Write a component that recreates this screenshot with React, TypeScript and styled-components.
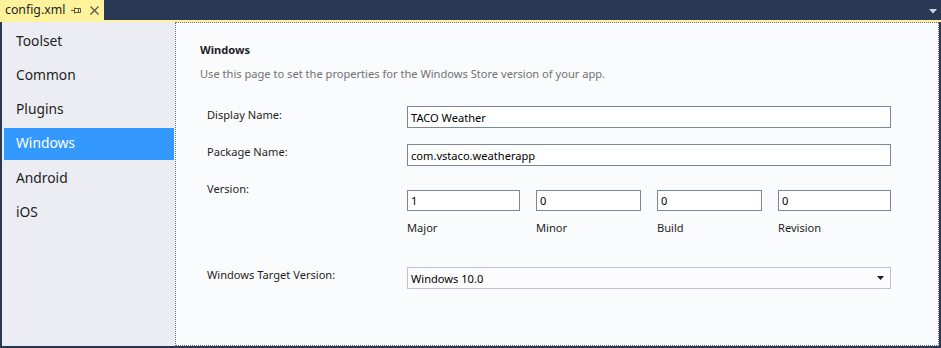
import React from "react";
import styled, { createGlobalStyle } from "styled-components";

const Global = createGlobalStyle`
  html, body { margin: 0; padding: 0; background: #293955; }
  body { width: 941px; height: 348px; overflow: hidden; }
  * { box-sizing: border-box; }
`;

const FONT = `"Noto Sans", "Open Sans", sans-serif`;

const Frame = styled.div`
  width: 941px;
  height: 348px;
  display: flex;
  flex-direction: column;
  background: #293955;
  font-family: ${FONT};
`;

const TabBar = styled.div`
  height: 20px;
  display: flex;
  align-items: stretch;
  justify-content: space-between;
`;

const Tab = styled.div`
  width: 104px;
  background: #fff29d;
  display: flex;
  align-items: center;
  padding-left: 5px;
  font-size: 12.3px;
  color: #1e1e1e;
`;

const TabTitle = styled.span`
  width: 66px;
  line-height: 20px;
`;

const TabIcon = styled.svg<{ $mr: number }>`
  display: block;
  margin-right: ${(p) => p.$mr}px;
`;

const MenuArrow = styled.svg`
  display: block;
  margin: 9px 4px 0 0;
`;

const YellowStrip = styled.div`
  height: 2px;
  background: #fff29d;
`;

const Body = styled.div`
  flex: 1;
  display: flex;
  margin: 0 2px 2px 2px;
`;

const Sidebar = styled.div`
  width: 173px;
  background: #ecedf2;
  padding: 3px 0 0 2px;
  display: flex;
  flex-direction: column;
  gap: 2.33px;
`;

const NavItem = styled.div<{ $active?: boolean }>`
  height: 32px;
  width: 170px;
  display: flex;
  align-items: center;
  padding-left: 12px;
  padding-bottom: 2px;
  font-size: 13.8px;
  color: ${(p) => (p.$active ? "#ffffff" : "#1e1e1e")};
  background: ${(p) => (p.$active ? "#3399ff" : "transparent")};
`;

const Content = styled.div`
  flex: 1;
  background: #fafbfd;
  border: 1px dotted #6f6f6f;
  padding: 19px 0 0 24px;
  font-size: 11.1px;
  color: #1e1e1e;
`;

const Heading = styled.div`
  font-weight: bold;
  line-height: 16px;
`;

const Description = styled.div`
  color: #717171;
  line-height: 16px;
  margin-top: 8px;
`;

const Form = styled.div`
  margin-top: 24px;
  margin-left: 7px;
  display: flex;
  flex-direction: column;
`;

const Row = styled.div<{ $mt: number }>`
  display: flex;
  margin-top: ${(p) => p.$mt}px;
`;

const Label = styled.div<{ $mt?: number }>`
  width: 200px;
  line-height: 16px;
  margin-top: ${(p) => p.$mt ?? 0}px;
`;

const TextBox = styled.div<{ $h?: number; $w?: number }>`
  width: ${(p) => (p.$w ? `${p.$w}px` : "484px")};
  height: ${(p) => p.$h ?? 22}px;
  border: 1px solid #7a8699;
  background: #ffffff;
  display: flex;
  align-items: center;
  padding-left: 3px;
  color: #000;
`;

const VersionCol = styled.div`
  display: flex;
  flex-direction: column;
`;

const VersionGrid = styled.div`
  display: grid;
  grid-template-columns: 113px 105px 105px 113px;
  column-gap: 16px;
  margin-top: 9px;
`;

const SubLabel = styled.div`
  line-height: 16px;
  margin-top: 9px;
`;

const Select = styled.div`
  width: 484px;
  height: 22px;
  border: 1px solid #bcc3d3;
  background: #fcfcfe;
  display: flex;
  align-items: center;
  justify-content: space-between;
  padding: 0 6px 0 3px;
  color: #000;
`;

const versionParts = [
  { value: "1", label: "Major", w: 113 },
  { value: "0", label: "Minor", w: 105 },
  { value: "0", label: "Build", w: 105 },
  { value: "0", label: "Revision", w: 113 },
];

const nav = ["Toolset", "Common", "Plugins", "Windows", "Android", "iOS"];

export default function App() {
  return (
    <Frame>
      <Global />
      <TabBar>
        <Tab>
          <TabTitle>config.xml</TabTitle>
          <TabIcon $mr={9} width="10" height="9" viewBox="0 0 10 9">
            <path d="M0 4.5H3M3.5 1.5V7.5M3.5 2.5H9.5V6.5H3.5M7.5 2.5V6.5" stroke="#5a5a4a" strokeWidth="1" fill="none" />
          </TabIcon>
          <TabIcon $mr={0} width="9" height="9" viewBox="0 0 9 9">
            <path d="M0.5 0.5L8.5 8.5M8.5 0.5L0.5 8.5" stroke="#5a5a4a" strokeWidth="1.3" fill="none" />
          </TabIcon>
        </Tab>
        <MenuArrow width="8" height="5" viewBox="0 0 8 5">
          <path d="M0 0H8L4 4.5Z" fill="#d0d4de" />
        </MenuArrow>
      </TabBar>
      <YellowStrip />
      <Body>
        <Sidebar>
          {nav.map((n) => (
            <NavItem key={n} $active={n === "Windows"}>
              {n}
            </NavItem>
          ))}
        </Sidebar>
        <Content>
          <Heading>Windows</Heading>
          <Description>
            Use this page to set the properties for the Windows Store version of your app.
          </Description>
          <Form>
            <Row $mt={0}>
              <Label $mt={1}>Display Name:</Label>
              <TextBox>TACO Weather</TextBox>
            </Row>
            <Row $mt={16}>
              <Label $mt={0}>Package Name:</Label>
              <TextBox>com.vstaco.weatherapp</TextBox>
            </Row>
            <Row $mt={15}>
              <Label>Version:</Label>
              <VersionGrid>
                {versionParts.map((v) => (
                  <VersionCol key={v.label}>
                    <TextBox $h={21} $w={v.w}>
                      {v.value}
                    </TextBox>
                    <SubLabel>{v.label}</SubLabel>
                  </VersionCol>
                ))}
              </VersionGrid>
            </Row>
            <Row $mt={31}>
              <Label>Windows Target Version:</Label>
              <Select>
                <span>Windows 10.0</span>
                <svg width="7" height="4" viewBox="0 0 7 4">
                  <path d="M0 0H7L3.5 4Z" fill="#1e1e1e" />
                </svg>
              </Select>
            </Row>
          </Form>
        </Content>
      </Body>
    </Frame>
  );
}
